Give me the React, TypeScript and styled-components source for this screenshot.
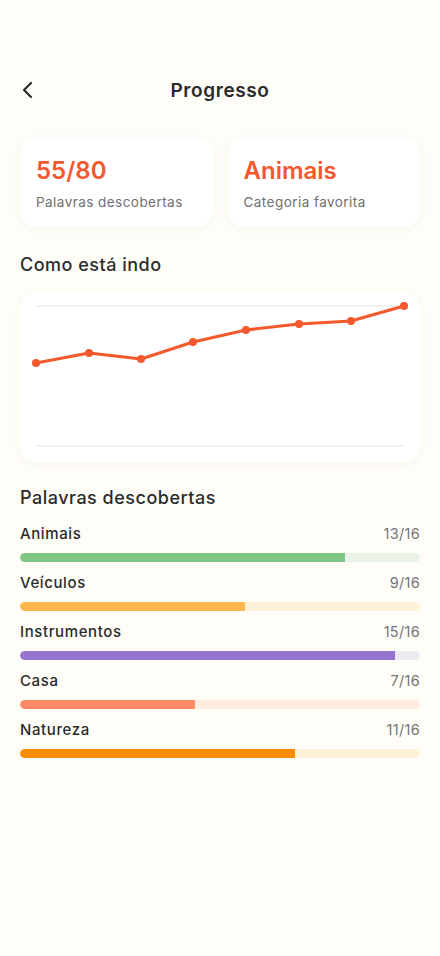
import React from "react"
import styled, { createGlobalStyle } from "styled-components"

const GlobalStyle = createGlobalStyle`
  html, body {
    margin: 0;
    padding: 0;
    background: #fffdf8;
  }
  body {
    font-family: Inter, "Noto Sans", sans-serif;
    color: #2b2b2b;
  }
`

const categories = [
  { name: "Animais", found: 13, total: 16, color: "#81c784", track: "#ebf3e9" },
  { name: "Veículos", found: 9, total: 16, color: "#ffb74d", track: "#fff0da" },
  { name: "Instrumentos", found: 15, total: 16, color: "#9575cd", track: "#ede9f1" },
  { name: "Casa", found: 7, total: 16, color: "#ff8a65", track: "#ffebdf" },
  { name: "Natureza", found: 11, total: 16, color: "#fb8c00", track: "#fff0d8" },
]

const points = [
  [36, 70],
  [89, 60],
  [141, 66],
  [193, 49],
  [246, 37],
  [299, 31],
  [351, 28],
  [404, 13],
]

const App: React.FC = () => {
  return (
    <Page>
      <GlobalStyle />
      <Header>
        <BackButton aria-label="Voltar">
          <svg width="24" height="24" viewBox="0 0 24 24" fill="none">
            <path d="M15 5l-7 7 7 7" stroke="#2b2b2b" strokeWidth="2.2" strokeLinecap="round" strokeLinejoin="round" />
          </svg>
        </BackButton>
        <Title>Progresso</Title>
      </Header>

      <StatsRow>
        <StatCard>
          <StatValue>55/80</StatValue>
          <StatLabel>Palavras descobertas</StatLabel>
        </StatCard>
        <StatCard>
          <StatValue>Animais</StatValue>
          <StatLabel>Categoria favorita</StatLabel>
        </StatCard>
      </StatsRow>

      <SectionTitle>Como está indo</SectionTitle>
      <ChartCard>
        <svg width="400" height="170" viewBox="20 -1 400 170">
          <line x1="36" y1="13" x2="404" y2="13" stroke="#eeeef1" strokeWidth="1.5" />
          <line x1="36" y1="153" x2="404" y2="153" stroke="#eeeef1" strokeWidth="1.5" />
          <polyline
            points={points.map(p => p.join(",")).join(" ")}
            fill="none"
            stroke="#f4592e"
            strokeWidth="3"
            strokeLinejoin="round"
          />
          {points.map(([x, y], i) => (
            <circle key={i} cx={x} cy={y} r="4" fill="#f4592e" />
          ))}
        </svg>
      </ChartCard>

      <SectionTitle className="words">Palavras descobertas</SectionTitle>
      <List>
        {categories.map(c => (
          <Row key={c.name}>
            <RowHead>
              <RowName>{c.name}</RowName>
              <RowCount>
                {c.found}/{c.total}
              </RowCount>
            </RowHead>
            <Track $color={c.track}>
              <Fill $color={c.color} style={{ width: `${(c.found / c.total) * 100}%` }} />
            </Track>
          </Row>
        ))}
      </List>
    </Page>
  )
}

const Page = styled.div`
  width: 440px;
  min-height: 956px;
  box-sizing: border-box;
  padding: 70px 20px 40px;
  background: #fffdf8;
`

const Header = styled.div`
  position: relative;
  height: 40px;
  display: flex;
  align-items: center;
  justify-content: center;
`

const BackButton = styled.button`
  position: absolute;
  left: -4px;
  top: 8px;
  padding: 0;
  border: none;
  background: none;
  display: flex;
`

const Title = styled.div`
  font-size: 19px;
  font-weight: 600;
  letter-spacing: 0.6px;
  color: #2b2b2b;
`

const StatsRow = styled.div`
  display: grid;
  grid-template-columns: 1fr 1fr;
  gap: 15px;
  margin-top: 28px;
`

const StatCard = styled.div`
  background: #fff;
  border-radius: 16px;
  box-shadow: 0 2px 10px rgba(120, 100, 60, 0.06);
  padding: 19px 16px 17px;
  height: 89px;
  box-sizing: border-box;
`

const StatValue = styled.div`
  font-size: 24px;
  font-weight: 600;
  color: #f4592e;
  line-height: 28px;
`

const StatLabel = styled.div`
  margin-top: 9px;
  font-size: 13.5px;
  color: #707070;
  letter-spacing: 0.45px;
`

const SectionTitle = styled.div`
  font-size: 18px;
  font-weight: 500;
  letter-spacing: 0.5px;
  color: #2b2b2b;
  margin-top: 26px;
  line-height: 24px;
  &.words {
    margin-top: 24px;
  }
`

const ChartCard = styled.div`
  margin-top: 15px;
  background: #fff;
  border-radius: 16px;
  box-shadow: 0 2px 10px rgba(120, 100, 60, 0.05);
  height: 170px;
  overflow: hidden;
  svg {
    display: block;
  }
`

const List = styled.div`
  display: flex;
  flex-direction: column;
  gap: 11px;
  margin-top: 14px;
`

const Row = styled.div`
  display: flex;
  flex-direction: column;
  gap: 10px;
`

const RowHead = styled.div`
  display: flex;
  justify-content: space-between;
  align-items: baseline;
  line-height: 19px;
`

const RowName = styled.div`
  font-size: 15px;
  font-weight: 500;
  letter-spacing: 0.6px;
  color: #2b2b2b;
`

const RowCount = styled.div`
  font-size: 14.5px;
  letter-spacing: 0.3px;
  color: #757575;
`

const Track = styled.div<{ $color: string }>`
  height: 9px;
  border-radius: 5px;
  background: ${p => p.$color};
  overflow: hidden;
`

const Fill = styled.div<{ $color: string }>`
  height: 100%;
  background: ${p => p.$color};
  border-radius: 5px 0 0 5px;
`

export default App
